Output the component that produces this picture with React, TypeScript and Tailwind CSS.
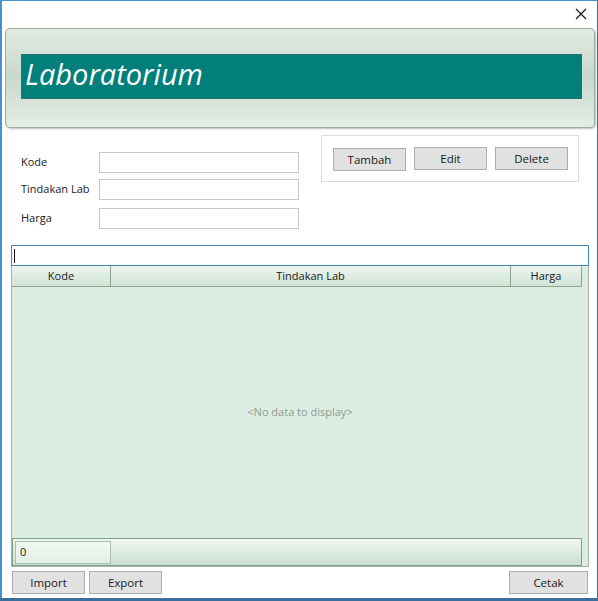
import React from 'react';

const ui = { fontFamily: '"Open Sans", "Liberation Sans", Arial, sans-serif' };

const Btn: React.FC<{ label: string; className?: string }> = ({ label, className }) => (
  <button
    type="button"
    className={`h-[23px] border border-[#adadad] bg-[#e1e1e1] text-[11.5px] text-[#1a1a1a] ${className ?? ''}`}
  >
    {label}
  </button>
);

const Field: React.FC<{ label: string; className?: string }> = ({ label, className }) => (
  <div className={`flex items-center ${className ?? ''}`}>
    <span className="w-[78px] text-[11px] text-[#1a1a1a]">{label}</span>
    <input className="h-[21px] w-[200px] border border-[#c8c8c8] bg-white outline-none" />
  </div>
);

export default function App() {
  return (
    <div className="h-[601px] w-[598px] bg-[#3a6f9c]" style={ui}>
      <div className="flex h-[598px] w-[597px] flex-col border-l-2 border-t border-[#4a90cc] bg-white">
        {/* title bar */}
        <div className="flex h-[27px] items-center justify-end pr-[10px]">
          <svg width="12" height="12" viewBox="0 0 12 12" className="mb-[2px]">
            <path d="M1 1L11 11M11 1L1 11" stroke="#111" strokeWidth="1.1" />
          </svg>
        </div>

        {/* header panel */}
        <div className="ml-[3px] mr-[2px] h-[100px] rounded-[5px] border border-[#95ab9b] bg-gradient-to-b from-[#e3ebe4] via-[#c8d8cc] to-[#e4eee6] shadow-[1px_1px_2px_rgba(0,0,0,0.25)]">
          <div className="ml-[15px] mr-[12px] mt-[25px] flex h-[45px] items-start border border-[#2f6f6c] bg-[#007f7b] pl-[3px]">
            <span
              className="mt-[1px] text-[29px] italic leading-[36px] text-white"
              style={{ fontFamily: '"Open Sans", "DejaVu Sans", sans-serif' }}
            >
              Laboratorium
            </span>
          </div>
        </div>

        {/* form */}
        <div className="flex h-[117px]">
          <div className="ml-[19px] pt-[24px]">
            <Field label="Kode" />
            <Field label="Tindakan Lab" className="mt-[6px]" />
            <Field label="Harga" className="mt-[8px]" />
          </div>
          <div className="ml-[22px] mt-[7px] flex h-[47px] w-[258px] items-start gap-[8px] border border-[#dcdcdc] pl-[11px] pt-[11px]">
            <Btn label="Tambah" className="mt-[1px] w-[73px]" />
            <Btn label="Edit" className="w-[73px]" />
            <Btn label="Delete" className="w-[73px]" />
          </div>
        </div>

        {/* search */}
        <div className="ml-[9px] flex h-[21px] w-[578px] items-center border border-[#3f84b8] bg-white pl-[2px]">
          <div className="h-[14px] w-[1px] bg-black" />
        </div>

        {/* grid */}
        <div className="ml-[9px] flex h-[301px] w-[578px] flex-col border border-t-0 border-[#a6b6aa] bg-[#dcede2]">
          <div className="flex h-[21px] w-[570px] border-b border-[#88a590] text-[11px] text-[#1a1a1a]">
            {[
              ['Kode', 'w-[99px]'],
              ['Tindakan Lab', 'w-[400px]'],
              ['Harga', 'flex-1'],
            ].map(([t, w]) => (
              <div
                key={t}
                className={`${w} flex items-center justify-center border-r border-[#88a590] bg-gradient-to-b from-[#ecf4ee] to-[#d2e4d7]`}
              >
                {t}
              </div>
            ))}
          </div>
          <div className="flex flex-1 items-center justify-center text-[11px] text-[#8d9b91]">
            &lt;No data to display&gt;
          </div>
          <div className="flex h-[28px] w-[570px] items-center border border-[#7f9d88] bg-gradient-to-b from-[#f1f7f2] to-[#c9dfcf] pl-[2px]">
            <div className="flex h-[23px] w-[96px] items-center border border-[#a9c2b0] bg-gradient-to-b from-[#f2f8f3] to-[#e3efe6] pl-[4px] text-[11px] text-[#1a1a1a]">
              0
            </div>
          </div>
        </div>

        {/* bottom buttons */}
        <div className="ml-[10px] mt-[4px] flex w-[576px] items-center">
          <Btn label="Import" className="w-[73px]" />
          <Btn label="Export" className="ml-[4px] w-[73px]" />
          <Btn label="Cetak" className="ml-auto w-[79px]" />
        </div>
      </div>
    </div>
  );
}
